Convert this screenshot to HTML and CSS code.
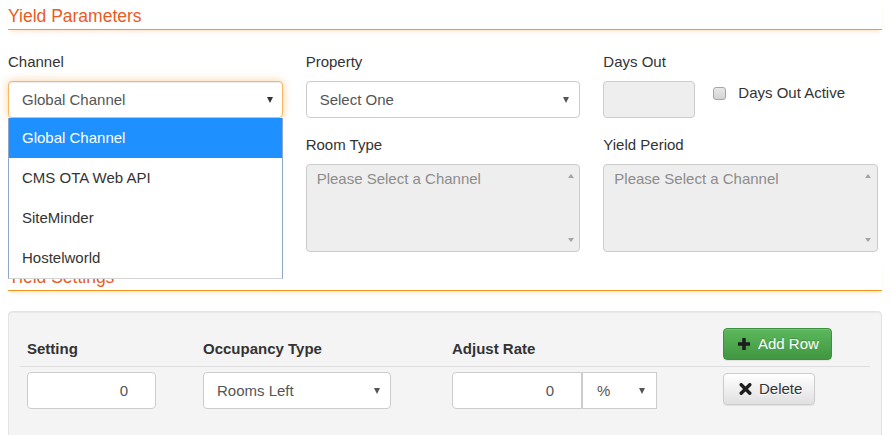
FILE: index.html
```html
<!DOCTYPE html>
<html>
<head>
<meta charset="utf-8">
<title>Yield Parameters</title>
<link rel="stylesheet" href="styles.css">
</head>
<body>
<div class="page">
  <h2 class="section-title">Yield Parameters</h2>

  <div class="param-grid">
    <div class="field">
      <label class="field-label">Channel</label>
      <div class="select-wrap">
        <div class="select select-focus"><span class="select-text">Global Channel</span><span class="caret caret-dark"></span></div>
        <ul class="dropdown">
          <li class="active">Global Channel</li>
          <li>CMS OTA Web API</li>
          <li>SiteMinder</li>
          <li>Hostelworld</li>
        </ul>
      </div>
    </div>

    <div class="field">
      <label class="field-label">Property</label>
      <div class="select"><span class="select-text">Select One</span><span class="caret"></span></div>
    </div>

    <div class="field">
      <label class="field-label">Days Out</label>
      <div class="days-row">
        <div class="input input-disabled days-input"></div>
        <label class="check"><span class="check-box"></span><span class="check-text">Days Out Active</span></label>
      </div>
    </div>

    <div class="field"></div>

    <div class="field">
      <label class="field-label">Room Type</label>
      <div class="multi">
        <div class="multi-text">Please Select a Channel</div>
        <div class="scrollbar"><span class="arrow-up"></span><span class="arrow-down"></span></div>
      </div>
    </div>

    <div class="field">
      <label class="field-label">Yield Period</label>
      <div class="multi">
        <div class="multi-text">Please Select a Channel</div>
        <div class="scrollbar"><span class="arrow-up"></span><span class="arrow-down"></span></div>
      </div>
    </div>
  </div>

  <h2 class="section-title section-title-2">Yield Settings</h2>

  <div class="well">
    <div class="yt-row yt-head">
      <div class="yt-cell"><span class="th">Setting</span></div>
      <div class="yt-cell"><span class="th">Occupancy Type</span></div>
      <div class="yt-cell"><span class="th">Adjust Rate</span></div>
      <div class="yt-cell">
        <button class="btn btn-success"><svg class="icon" width="12" height="12" viewBox="0 0 12 12"><rect x="4.25" y="0" width="3.5" height="12" fill="#1d1d1d"/><rect x="0" y="4.25" width="12" height="3.5" fill="#1d1d1d"/></svg><span>Add Row</span></button>
      </div>
    </div>
    <div class="yt-row yt-body">
      <div class="yt-cell"><div class="input input-num setting-input">0</div></div>
      <div class="yt-cell"><div class="select occ-select"><span class="select-text">Rooms Left</span><span class="caret"></span></div></div>
      <div class="yt-cell">
        <div class="adj-group">
          <div class="input input-num adj-input">0</div>
          <div class="select pct-select"><span class="select-text">%</span><span class="caret"></span></div>
        </div>
      </div>
      <div class="yt-cell">
        <button class="btn btn-default btn-delete"><svg class="icon" width="13" height="12" viewBox="0 0 13 12"><path d="M2.2 1.7 L10.8 10.3 M10.8 1.7 L2.2 10.3" stroke="#1d1d1d" stroke-width="3.4" stroke-linecap="round" fill="none"/></svg><span>Delete</span></button>
      </div>
    </div>
  </div>
</div>
</body>
</html>
```

FILE: styles.css
```css
* { box-sizing: border-box; }

html, body {
  margin: 0;
  padding: 0;
  background: #fff;
}

body {
  font-family: "Liberation Sans", Arial, Helvetica, sans-serif;
  font-size: 15px;
  line-height: 20px;
  color: #333;
  overflow: hidden;
}

.page {
  padding: 0 10px 0 8px;
}

.section-title {
  margin: 0;
  padding: 6px 0 3px;
  font-size: 17.5px;
  line-height: 20px;
  font-weight: normal;
  color: #e95b1f;
  border-bottom: 1px solid #f8961e;
  box-shadow: 0 3px 4px -2px rgba(248, 150, 30, 0.3);
}

.section-title-2 {
  margin-top: 9px;
}

.param-grid {
  display: grid;
  grid-template-columns: repeat(3, 1fr);
  column-gap: 23px;
  row-gap: 17px;
  margin: 22px 4px 0 0;
}

.field-label {
  display: block;
  font-size: 15px;
  line-height: 20px;
  margin-bottom: 9px;
  color: #333;
}

.select {
  display: flex;
  align-items: center;
  justify-content: space-between;
  height: 37px;
  padding: 0 10px 0 13px;
  border: 1px solid #ccc;
  border-radius: 4px;
  background: #fff;
  color: #555;
  font-size: 15px;
}

.select-focus {
  border-color: #f6b663;
  box-shadow: inset 0 1px 1px rgba(0, 0, 0, 0.075), 0 0 8px rgba(247, 148, 29, 0.45);
  padding-right: 9px;
}

.caret {
  width: 0;
  height: 0;
  border-left: 3.5px solid transparent;
  border-right: 3.5px solid transparent;
  border-top: 6px solid #555;
}

.caret-dark {
  border-top-color: #333;
}

.select-wrap {
  position: relative;
}

.dropdown {
  position: absolute;
  top: 100%;
  left: 0;
  width: 100%;
  margin: 0;
  padding: 0;
  list-style: none;
  background: #fff;
  border: 1px solid #8fa5c9;
  border-top: 0;
  border-bottom-color: #d4d4d4;
  z-index: 10;
}

.dropdown li {
  height: 40px;
  line-height: 40px;
  padding-left: 13px;
  font-size: 15px;
  color: #333;
}

.dropdown li.active {
  background: #1e90ff;
  color: #fff;
}

.days-row {
  display: flex;
  align-items: flex-start;
}

.input {
  height: 37px;
  border: 1px solid #ccc;
  border-radius: 4px;
  background: #fff;
  color: #555;
  font-size: 15px;
  line-height: 35px;
}

.input-disabled {
  background: #eee;
}

.days-input {
  width: 92px;
}

.check {
  display: flex;
  align-items: center;
  margin: 2px 0 0 18px;
  font-size: 15px;
  line-height: 20px;
  color: #333;
}

.check-box {
  width: 13px;
  height: 13px;
  margin-right: 12px;
  border: 1px solid #a6a6a6;
  border-radius: 3px;
  background: linear-gradient(#e8e8e8, #d4d4d4);
}

.multi {
  display: flex;
  height: 88px;
  border: 1px solid #ccc;
  border-radius: 4px;
  background: #eee;
  overflow: hidden;
}

.multi-text {
  flex: 1;
  padding: 4px 10px;
  font-size: 15px;
  line-height: 20px;
  color: #8c8c8c;
}

.scrollbar {
  width: 17px;
  display: flex;
  flex-direction: column;
  justify-content: space-between;
  align-items: center;
  padding: 9px 0 9px;
}

.arrow-up {
  width: 0;
  height: 0;
  border-left: 3.5px solid transparent;
  border-right: 3.5px solid transparent;
  border-bottom: 4px solid #a3a3a3;
}

.arrow-down {
  width: 0;
  height: 0;
  border-left: 3.5px solid transparent;
  border-right: 3.5px solid transparent;
  border-top: 4px solid #a3a3a3;
}

.well {
  margin-top: 20px;
  background: #f4f4f4;
  border: 1px solid #e3e3e3;
  border-radius: 4px;
  padding: 10px 11px 60px;
  box-shadow: inset 0 1px 1px rgba(0, 0, 0, 0.05);
}

.yt-row {
  display: grid;
  grid-template-columns: 176px 249px 271px 1fr;
}

.yt-head {
  align-items: end;
  padding: 6px 0;
  border-bottom: 1px solid #ddd;
}

.yt-body {
  align-items: start;
  padding-top: 5px;
}

.yt-cell {
  padding-left: 7px;
}

.th {
  display: block;
  font-weight: bold;
  font-size: 15px;
  line-height: 20px;
  padding-bottom: 1px;
  color: #333;
}

.input-num {
  text-align: right;
  padding-right: 27px;
}

.setting-input {
  width: 129px;
}

.occ-select {
  width: 188px;
}

.adj-group {
  display: flex;
}

.adj-input {
  width: 130px;
  border-radius: 4px 0 0 4px;
}

.pct-select {
  width: 75px;
  border-radius: 0;
  padding: 0 11px 0 14px;
}

.btn {
  display: inline-flex;
  align-items: center;
  height: 32px;
  padding: 0 12px 0 14px;
  border: 1px solid #ccc;
  border-radius: 4px;
  font-family: "Liberation Sans", Arial, Helvetica, sans-serif;
  font-size: 15px;
  line-height: 20px;
  cursor: pointer;
}

.btn .icon {
  margin-right: 8px;
  flex: none;
}

.btn-success {
  color: #fff;
  background: linear-gradient(#5cb85c, #419641);
  border-color: #3e8f3e;
  text-shadow: 0 -1px 0 rgba(0, 0, 0, 0.2);
  box-shadow: inset 0 1px 0 rgba(255, 255, 255, 0.15), 0 1px 1px rgba(0, 0, 0, 0.075);
}

.btn-default {
  color: #333;
  background: linear-gradient(#fff, #e0e0e0);
  border-color: #ccc;
  text-shadow: 0 1px 0 #fff;
  box-shadow: inset 0 1px 0 rgba(255, 255, 255, 0.15), 0 1px 1px rgba(0, 0, 0, 0.075);
}

.btn-delete {
  margin-top: 1px;
  padding-left: 15px;
}

.btn-delete .icon {
  margin-right: 7px;
}
```
